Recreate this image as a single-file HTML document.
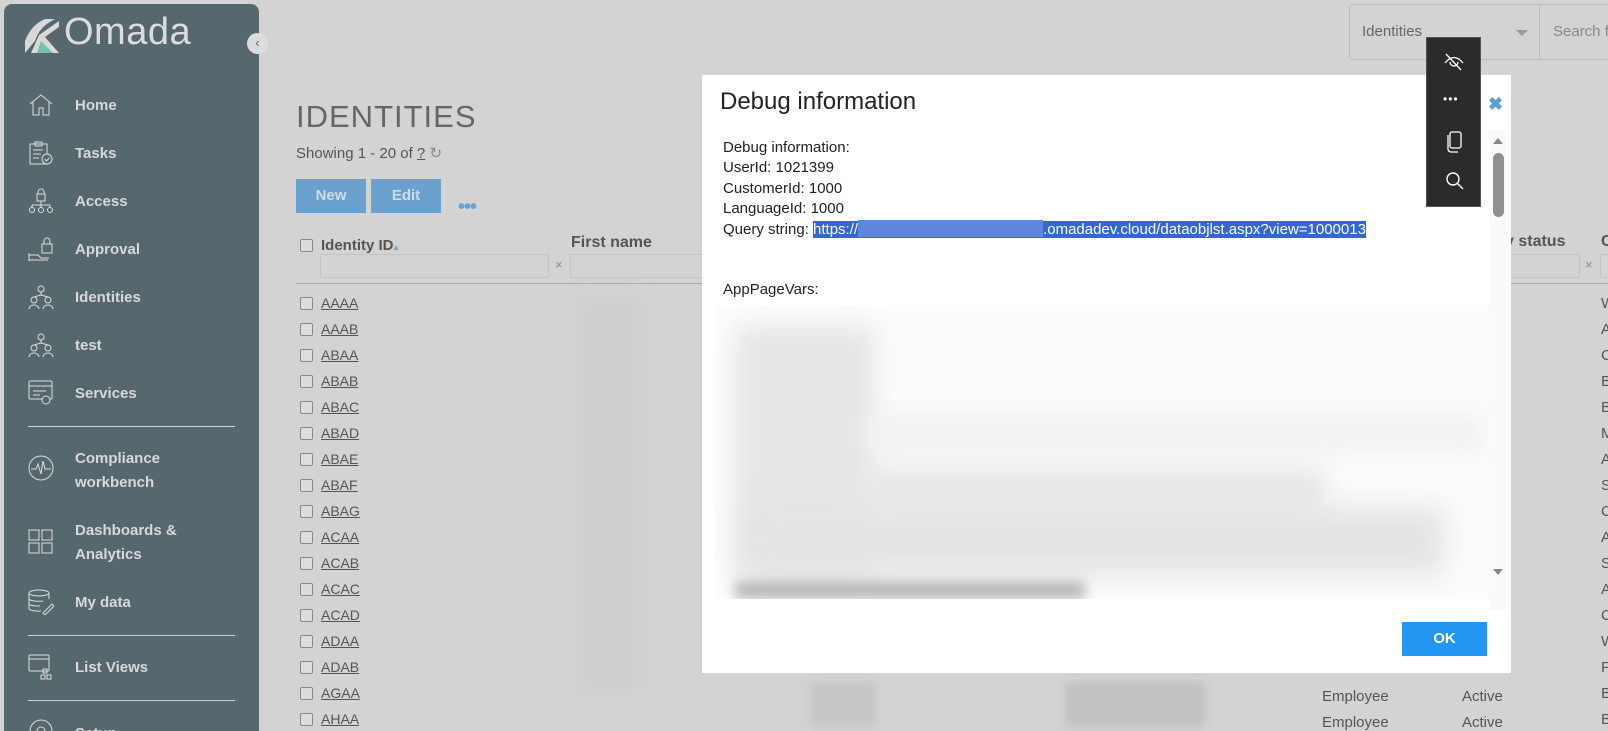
<!DOCTYPE html>
<html style="overflow:hidden;height:731px"><head><meta charset="utf-8">
<style>
*{box-sizing:border-box;margin:0;padding:0}
body{width:1608px;height:731px;overflow:hidden;background:#d3d3d3;font-family:"Liberation Sans",sans-serif;position:relative;color:#555}
.abs{position:absolute}
.side{left:4px;top:4px;width:255px;height:727px;background:#56676e;border-radius:8px 8px 0 0}
.nav{position:absolute;left:75px;color:#d8d8d8;font-weight:bold;font-size:15px;line-height:24px}
.ic{position:absolute;left:28px;width:26px;height:26px}
.div{position:absolute;left:28px;width:207px;height:1px;background:#d0d0d0}
.row{position:absolute;left:300px;font-size:14px;color:#555}
.cb{display:inline-block;width:13px;height:13px;border:1px solid #888;border-radius:2px;background:#ddd;vertical-align:-2px;margin-right:8px}
.row u{color:#555}
.rl{position:absolute;left:1601px;font-size:15px;color:#555}
.modal{left:702px;top:75px;width:809px;height:598px;background:#fff}
.mt{font-size:15px;color:#222;line-height:20.4px}
</style></head><body>
<div class="abs side"></div>
<svg class="abs" style="left:25px;top:19px" width="36" height="34" viewBox="0 0 36 34">
<path d="M0 34 L0 22 Q6 6 20 0 L30 0 Q14 8 10 22 Z" fill="#d8d8d8"/>
<path d="M10 34 L18 18 L34 34Z" fill="#7bbfa6"/>
<path d="M6 34 L14 16 L34 2 L34 8 L20 18 L34 34 L28 34 L16 22 L12 34Z" fill="#d8d8d8"/>
</svg>
<div class="abs" style="left:64px;top:11px;font-size:38px;color:#dcdcdc;letter-spacing:0.5px">Omada</div>
<div class="abs" style="left:247px;top:33px;width:21px;height:21px;border-radius:50%;background:#dcdcdc;color:#666;font-size:13px;text-align:center;line-height:20px">‹</div>

<svg class="ic" style="top:92px" viewBox="0 0 26 26" fill="none" stroke="#ddd" stroke-width="1"><path d="M2 12 L13 3 L24 12 M5 10 V23 H11 V16 H15 V23 H21 V10"/></svg>
<div class="nav" style="top:94px">Home</div>
<svg class="ic" style="top:140px" viewBox="0 0 26 26" fill="none" stroke="#ddd" stroke-width="1"><rect x="2" y="4" width="17" height="20"/><rect x="7" y="2" width="7" height="4"/><path d="M5 10h10M5 14h8M5 18h6"/><circle cx="19" cy="19" r="5" fill="#56676e"/><path d="M16.5 19l2 2 3-3.5"/></svg>
<div class="nav" style="top:142px">Tasks</div>
<svg class="ic" style="top:188px" viewBox="0 0 26 26" fill="none" stroke="#ddd" stroke-width="1"><rect x="9" y="6" width="8" height="7"/><path d="M10 6 V4 a3 3 0 0 1 6 0 V6 M13 13 V17 M4 17 H22 M4 17 V20 M13 17 V20 M22 17 V20"/><circle cx="4" cy="22" r="2.5"/><circle cx="13" cy="22" r="2.5"/><circle cx="22" cy="22" r="2.5"/></svg>
<div class="nav" style="top:190px">Access</div>
<svg class="ic" style="top:236px" viewBox="0 0 26 26" fill="none" stroke="#ddd" stroke-width="1"><rect x="14" y="8" width="10" height="9"/><path d="M16 8 V5 a3 3 0 0 1 6 0 V8 M1 17 V25 M1 19 H10 L13 22 H21 M1 24 H20"/></svg>
<div class="nav" style="top:238px">Approval</div>
<svg class="ic" style="top:284px" viewBox="0 0 26 26" fill="none" stroke="#ddd" stroke-width="1"><circle cx="13" cy="5" r="3"/><circle cx="6" cy="16" r="3"/><circle cx="20" cy="16" r="3"/><path d="M13 8 V11 L6 13 M13 11 L20 13 M1 25 a5 4 0 0 1 10 0 M15 25 a5 4 0 0 1 10 0"/></svg>
<div class="nav" style="top:286px">Identities</div>
<svg class="ic" style="top:332px" viewBox="0 0 26 26" fill="none" stroke="#ddd" stroke-width="1"><circle cx="13" cy="5" r="3"/><circle cx="6" cy="16" r="3"/><circle cx="20" cy="16" r="3"/><path d="M13 8 V11 L6 13 M13 11 L20 13 M1 25 a5 4 0 0 1 10 0 M15 25 a5 4 0 0 1 10 0"/></svg>
<div class="nav" style="top:334px">test</div>
<svg class="ic" style="top:380px" viewBox="0 0 26 26" fill="none" stroke="#ddd" stroke-width="1"><rect x="1" y="1" width="23" height="18" rx="1"/><path d="M1 6 H24 M5 11 H18 M5 15 H12"/><circle cx="18" cy="20" r="4" fill="#56676e"/></svg>
<div class="nav" style="top:382px">Services</div>
<div class="div" style="top:426px"></div>
<svg class="ic" style="top:455px" viewBox="0 0 26 26" fill="none" stroke="#ddd" stroke-width="1"><circle cx="13" cy="13" r="12"/><path d="M3 14 H8 L10 9 L13 19 L15 6 L17 14 H23"/></svg>
<div class="nav" style="top:447px">Compliance<br>workbench</div>
<svg class="ic" style="top:529px" viewBox="0 0 26 26" fill="none" stroke="#ddd" stroke-width="1"><rect x="1" y="1" width="10" height="10"/><rect x="14" y="1" width="10" height="10"/><rect x="1" y="14" width="10" height="10"/><rect x="14" y="14" width="10" height="10"/></svg>
<div class="nav" style="top:519px">Dashboards &amp;<br>Analytics</div>
<svg class="ic" style="top:589px" viewBox="0 0 26 26" fill="none" stroke="#ddd" stroke-width="1"><ellipse cx="11" cy="4" rx="10" ry="3"/><path d="M1 4 V20 a10 3 0 0 0 12 2 M1 10 a10 3 0 0 0 14 2 M1 15 a10 3 0 0 0 11 2 M21 4 V10 M15 24 L24 15 L26 17 L17 26 Z"/></svg>
<div class="nav" style="top:591px">My data</div>
<div class="div" style="top:635px"></div>
<svg class="ic" style="top:654px" viewBox="0 0 26 26" fill="none" stroke="#ddd" stroke-width="1"><rect x="1" y="1" width="20" height="16" rx="1"/><path d="M1 5 H21"/><rect x="15" y="15" width="4" height="4"/><rect x="13" y="21" width="4" height="4"/><rect x="19" y="21" width="4" height="4"/></svg>
<div class="nav" style="top:656px">List Views</div>
<div class="div" style="top:700px"></div>
<svg class="ic" style="top:718px" viewBox="0 0 26 26" fill="none" stroke="#ddd" stroke-width="1"><circle cx="13" cy="13" r="11"/><circle cx="13" cy="13" r="4"/></svg>
<div class="nav" style="top:722px;height:9px;overflow:hidden">Setup</div>

<div class="abs" style="left:1349px;top:4px;width:270px;height:56px;border:1px solid #bbb;border-radius:4px"></div>
<div class="abs" style="left:1539px;top:4px;width:1px;height:56px;background:#bbb"></div>
<div class="abs" style="left:1362px;top:23px;font-size:15px;color:#666">Identities</div>
<div class="abs" style="left:1516px;top:30px;border:6px solid transparent;border-top:6px solid #999;border-bottom:0;width:0"></div>
<div class="abs" style="left:1553px;top:23px;font-size:15px;color:#888;white-space:nowrap">Search f</div>

<div class="abs" style="left:296px;top:99px;font-size:31px;color:#666;letter-spacing:1px">IDENTITIES</div>
<div class="abs" style="left:296px;top:144px;font-size:15px;color:#555">Showing 1 - 20 of <u>?</u> <span style="color:#888">↻</span></div>
<div class="abs" style="left:296px;top:179px;width:70px;height:34px;background:#6aa1cf;color:#cfdde8;font-weight:bold;font-size:15px;text-align:center;line-height:34px">New</div>
<div class="abs" style="left:371px;top:179px;width:70px;height:34px;background:#6aa1cf;color:#cfdde8;font-weight:bold;font-size:15px;text-align:center;line-height:34px">Edit</div>
<div class="abs" style="left:458px;top:196px;font-size:20px;color:#6aa1cf;font-weight:bold;letter-spacing:-1px">•••</div>
<div class="abs" style="left:300px;top:237px;font-size:15px;color:#555;font-weight:bold"><span class="cb"></span>Identity ID<span style="color:#8ab;font-size:10px">▴</span></div>
<div class="abs" style="left:571px;top:234px;font-size:16px;color:#555;font-weight:bold">First name</div>
<div class="abs" style="left:320px;top:254px;width:229px;height:24px;border:1px solid #c4c4c4"></div>
<div class="abs" style="left:555px;top:257px;font-size:13px;color:#889">×</div>
<div class="abs" style="left:570px;top:254px;width:140px;height:24px;border:1px solid #c4c4c4"></div>
<div class="abs" style="left:296px;top:283px;width:1320px;height:1px;background:#aaa"></div>
<div class="abs" style="left:1505px;top:233px;font-size:16px;color:#555;font-weight:bold">y status</div>
<div class="abs" style="left:1510px;top:254px;width:70px;height:24px;border:1px solid #c4c4c4"></div>
<div class="abs" style="left:1585px;top:257px;font-size:13px;color:#889">×</div>
<div class="abs" style="left:1600px;top:254px;width:20px;height:24px;border:1px solid #c4c4c4"></div>
<div class="abs" style="left:1601px;top:233px;font-size:16px;color:#555;font-weight:bold">C</div>

<div class="row" style="top:295px"><span class="cb"></span><u>AAAA</u></div>
<div class="row" style="top:321px"><span class="cb"></span><u>AAAB</u></div>
<div class="row" style="top:347px"><span class="cb"></span><u>ABAA</u></div>
<div class="row" style="top:373px"><span class="cb"></span><u>ABAB</u></div>
<div class="row" style="top:399px"><span class="cb"></span><u>ABAC</u></div>
<div class="row" style="top:425px"><span class="cb"></span><u>ABAD</u></div>
<div class="row" style="top:451px"><span class="cb"></span><u>ABAE</u></div>
<div class="row" style="top:477px"><span class="cb"></span><u>ABAF</u></div>
<div class="row" style="top:503px"><span class="cb"></span><u>ABAG</u></div>
<div class="row" style="top:529px"><span class="cb"></span><u>ACAA</u></div>
<div class="row" style="top:555px"><span class="cb"></span><u>ACAB</u></div>
<div class="row" style="top:581px"><span class="cb"></span><u>ACAC</u></div>
<div class="row" style="top:607px"><span class="cb"></span><u>ACAD</u></div>
<div class="row" style="top:633px"><span class="cb"></span><u>ADAA</u></div>
<div class="row" style="top:659px"><span class="cb"></span><u>ADAB</u></div>
<div class="row" style="top:685px"><span class="cb"></span><u>AGAA</u></div>
<div class="row" style="top:711px"><span class="cb"></span><u>AHAA</u></div>

<div class="rl" style="top:295px">W</div><div class="rl" style="top:321px">A</div><div class="rl" style="top:347px">C</div><div class="rl" style="top:373px">B</div><div class="rl" style="top:399px">B</div><div class="rl" style="top:425px">M</div><div class="rl" style="top:451px">A</div><div class="rl" style="top:477px">S</div><div class="rl" style="top:503px">C</div><div class="rl" style="top:529px">A</div><div class="rl" style="top:555px">S</div><div class="rl" style="top:581px">A</div><div class="rl" style="top:607px">C</div><div class="rl" style="top:633px">W</div><div class="rl" style="top:659px">F</div><div class="rl" style="top:685px">B</div><div class="rl" style="top:711px">B</div>
<div class="abs" style="left:1322px;top:684px;font-size:15px;color:#555;line-height:26px">Employee<br>Employee</div>
<div class="abs" style="left:1462px;top:684px;font-size:15px;color:#555;line-height:26px">Active<br>Active</div>
<div class="abs" style="left:810px;top:682px;width:65px;height:45px;background:#c6c6c6;filter:blur(4px)"></div>
<div class="abs" style="left:1065px;top:682px;width:140px;height:45px;background:#c2c2c2;filter:blur(4px)"></div>
<div class="abs" style="left:580px;top:295px;width:60px;height:400px;background:#cbcbcb;filter:blur(8px);opacity:.5"></div>

<div class="abs modal"></div>
<div class="abs" style="left:720px;top:88px;font-size:24px;color:#222">Debug information</div>
<div class="abs" style="left:1488px;top:94px;font-size:18px;color:#5a9fd4;font-weight:bold">✖</div>
<div class="abs mt" style="left:723px;top:138px">Debug information:<br>UserId: 1021399<br>CustomerId: 1000<br>LanguageId: 1000<br>Query string: <span style="background:#3466d4;color:#fff">https://<span style="display:inline-block;width:185px;height:17px;background:#5f88dc;vertical-align:-3px"></span>.omadadev.cloud/dataobjlst.aspx?view=1000013</span></div>
<div class="abs mt" style="left:723px;top:280px">AppPageVars:</div>
<div class="abs" style="left:1489px;top:130px;width:20px;height:480px;background:#fafafa"></div>
<div class="abs" style="left:1493px;top:138px;border:5px solid transparent;border-bottom:6px solid #888;border-top:0;width:0"></div>
<div class="abs" style="left:1493px;top:153px;width:11px;height:64px;background:#909090;border-radius:6px"></div>
<div class="abs" style="left:1493px;top:569px;border:5px solid transparent;border-top:6px solid #888;border-bottom:0;width:0"></div>
<div class="abs" style="left:715px;top:306px;width:774px;height:293px;background:#fcfcfc;overflow:hidden">
 <div class="abs" style="left:20px;top:20px;width:140px;height:250px;background:#e6e6e6;filter:blur(12px)"></div>
 <div class="abs" style="left:150px;top:110px;width:620px;height:35px;background:#f0f0f0;filter:blur(12px)"></div>
 <div class="abs" style="left:150px;top:160px;width:460px;height:50px;background:#e8e8e8;filter:blur(12px)"></div>
 <div class="abs" style="left:30px;top:200px;width:700px;height:70px;background:#e4e4e4;filter:blur(14px)"></div>
 <div class="abs" style="left:20px;top:275px;width:350px;height:18px;background:#b8b8b8;filter:blur(6px)"></div>
</div>
<div class="abs" style="left:1402px;top:622px;width:85px;height:34px;background:#2196f3;color:#fff;font-weight:bold;font-size:15px;text-align:center;line-height:34px">OK</div>

<div class="abs" style="left:1426px;top:37px;width:55px;height:170px;background:#2b2b2b;border:1px solid #555"></div>
<svg class="abs" style="left:1443px;top:52px" width="22" height="20" viewBox="0 0 22 20" fill="none" stroke="#fff" stroke-width="1.3"><path d="M2 11 Q11 0 20 11 M7 10 a4 4 0 0 0 8 0 M3 2 L18 18"/></svg>
<div class="abs" style="left:1443px;top:92px;color:#fff;font-size:12px;letter-spacing:1px">•••</div>
<svg class="abs" style="left:1445px;top:130px" width="18" height="24" viewBox="0 0 18 24" fill="none" stroke="#fff" stroke-width="1.3"><rect x="5" y="2" width="11" height="16" rx="2"/><path d="M3 5 V19 a3 3 0 0 0 3 3 H13"/></svg>
<svg class="abs" style="left:1445px;top:171px" width="20" height="20" viewBox="0 0 20 20" fill="none" stroke="#fff" stroke-width="1.4"><circle cx="8" cy="8" r="6"/><path d="M12.5 12.5 L18 18"/></svg>
</body></html>
